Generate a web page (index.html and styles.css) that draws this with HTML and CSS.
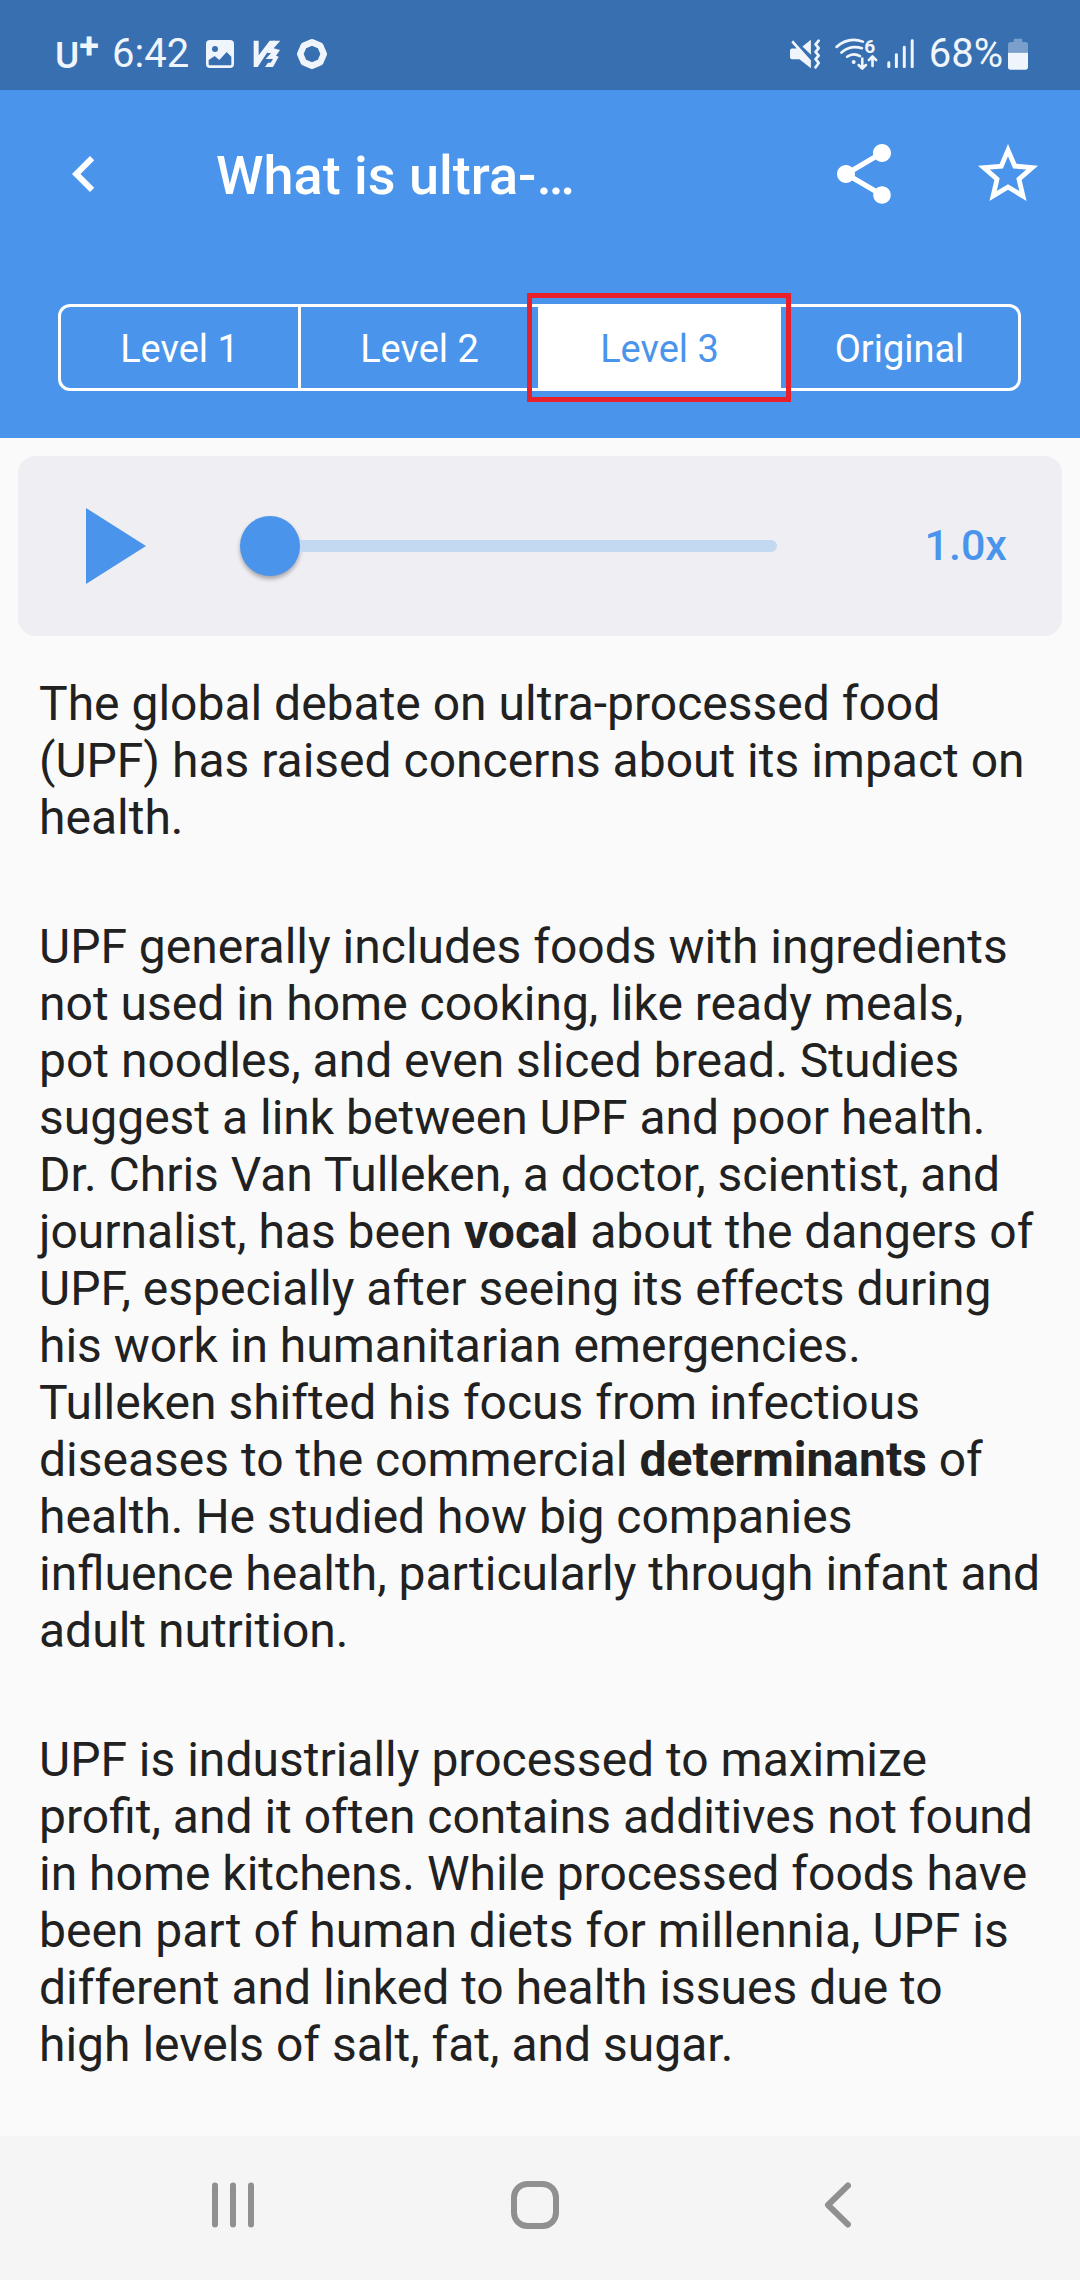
FILE: index.html
```html
<!DOCTYPE html>
<html lang="en">
<head>
  <meta charset="UTF-8" />
  <meta name="viewport" content="width=device-width, initial-scale=1.0"/>
  <title>What is ultra-processed food?</title>
  <link rel="stylesheet" href="styles.css">
</head>
<body>

  <div class="status-bar">
    <div class="status-left">
      <span class="carrier">U<span class="carrier-plus">+</span></span>
      <span class="clock">6:42</span>
      <svg class="icon-photo" viewBox="0 0 84 84">
        <path fill-rule="evenodd" d="M12 0H72Q84 0 84 12V72Q84 84 72 84H12Q0 84 0 72V12Q0 0 12 0ZM8 60V73Q8 76 11 76H73Q76 76 76 73V50L62 36L40 60L26 48ZM27 18A9 9 0 1 0 27 36A9 9 0 1 0 27 18Z"/>
      </svg>
      <svg class="icon-v3" viewBox="0 0 84 84">
        <path d="M2 2H17V46L50 2H66L14 81H2Z"/>
        <path d="M60 2H82L62 25L81 30L69 47L77 50L60 81H36L45 68H53L60 57H38L54 39H42Z"/>
      </svg>
      <svg class="icon-ring" viewBox="0 0 30 30">
        <polygon points="15,3.2 23.3,6.7 26.8,15 23.3,23.3 15,26.8 6.7,23.3 3.2,15 6.7,6.7"/>
      </svg>
    </div>
    <div class="status-right">
      <svg class="icon-mute" viewBox="60 54 92 92">
        <path d="M60 91Q60 85 66 85H80L64 67L69 61L122 120V144L88 117H66Q60 117 60 111ZM122 59V104L97 79Z"/>
        <path class="wave" d="M145 62L136 73L145 84L136 95L145 106L136 117L145 128L136 141"/>
      </svg>
      <svg class="icon-wifi" viewBox="192 50 132 100">
        <path class="line" d="M199 80Q235 48 279 64M214 97Q241 73 276 84M231 110Q250 96 270 108"/>
        <circle cx="251" cy="126" r="6"/>
        <path class="arrow" d="M277 115V145M266 135L277 146L288 135M308 138V109M297 120L308 109L319 120"/>
        <text x="283" y="97">6</text>
      </svg>
      <svg class="icon-signal" viewBox="351 56 81 88">
        <path d="M356 128V140M379 104V140M403 81V140M427 61V140"/>
      </svg>
      <span class="battery-level">68%</span>
      <svg class="icon-battery" viewBox="0 0 60 96">
        <path class="dim" d="M0 44V20Q0 12 8 12H17V6Q17 2 21 2H39Q43 2 43 6V12H52Q60 12 60 20V44Z"/>
        <path d="M0 44H60V87Q60 95 52 95H8Q0 95 0 87Z"/>
      </svg>
    </div>
  </div>

  <div class="header">
    <div class="top-bar">
      <svg class="icon back-icon" viewBox="0 0 24 24"><path d="M15.41 7.41L14 6l-6 6 6 6 1.41-1.41L10.83 12z"/></svg>
      <h2 class="page-title">What is ultra-…</h2>
      <svg class="icon" viewBox="0 0 24 24"><path d="M18 16.08c-.76 0-1.44.3-1.96.77L8.91 12.7c.05-.23.09-.46.09-.7s-.04-.47-.09-.7l7.05-4.11c.54.5 1.25.81 2.04.81 1.66 0 3-1.34 3-3s-1.34-3-3-3-3 1.34-3 3c0 .24.04.47.09.7L8.04 9.81C7.5 9.31 6.79 9 6 9c-1.66 0-3 1.34-3 3s1.34 3 3 3c.79 0 1.5-.31 2.04-.81l7.12 4.16c-.05.21-.08.43-.08.65 0 1.61 1.31 2.92 2.92 2.92 1.61 0 2.92-1.31 2.92-2.92s-1.31-2.92-2.92-2.92z"/></svg>
      <svg class="icon star-icon" viewBox="0 0 24 24"><path d="M22 9.24l-7.19-.62L12 2 9.19 8.63 2 9.24l5.46 4.73L5.82 21 12 17.27 18.18 21l-1.63-7.03L22 9.24zM12 15.4l-3.76 2.27 1-4.28-3.32-2.88 4.38-.38L12 6.1l1.71 4.04 4.38.38-3.32 2.88 1 4.28L12 15.4z"/></svg>
    </div>
    <div class="levels">
      <div class="level">Level 1</div>
      <div class="level">Level 2</div>
      <div class="level active">Level 3</div>
      <div class="level">Original</div>
    </div>
  </div>

  <div class="player">
    <svg class="play-icon" viewBox="0 0 60 76"><path d="M0 0L60 38L0 76Z"/></svg>
    <div class="slider">
      <div class="thumb"></div>
      <div class="track"></div>
    </div>
    <span class="speed">1.0x</span>
  </div>

  <div class="article">
    <p>The global debate on ultra-processed food (UPF) has raised concerns about its impact on health.</p>
    <p>UPF generally includes foods with ingredients not used in home cooking, like ready meals, pot noodles, and even sliced bread. Studies suggest a link between UPF and poor health. Dr. Chris Van Tulleken, a doctor, scientist, and journalist, has been <b>vocal</b> about the dangers of UPF, especially after seeing its effects during his work in humanitarian emergencies. Tulleken shifted his focus from infectious diseases to the commercial <b>determinants</b> of health. He studied how big companies influence health, particularly through infant and adult nutrition.</p>
    <p>UPF is industrially processed to maximize profit, and it often contains additives not found in home kitchens. While processed foods have been part of human diets for millennia, UPF is different and linked to health issues due to high levels of salt, fat, and sugar.</p>
  </div>

  <div class="nav-bar">
    <svg class="nav-recents" viewBox="0 0 42 48"><path d="M3 4.5V43.5M21 4.5V43.5M39 4.5V43.5"/></svg>
    <svg class="nav-home" viewBox="0 0 48 48"><rect x="3" y="3" width="42" height="42" rx="13.5"/></svg>
    <svg class="nav-back" viewBox="0 0 27 48"><path d="M24 4.5L4 24L24 43.5"/></svg>
  </div>

</body>
</html>
```
FILE: styles.css
```css
* {
  box-sizing: border-box;
}
body {
  margin: 0;
  width: 1080px;
  height: 2280px;
  font-family: Roboto, sans-serif;
  background-color: #fafafa;
  color: #212121;
  display: flex;
  flex-direction: column;
}
svg {
  display: block;
  flex: none;
}

/* status bar */
.status-bar {
  flex: none;
  height: 90px;
  padding: 17px 52px 0 55px;
  background-color: #386fb1;
  color: #f0f5fc;
  fill: #f0f5fc;
  display: flex;
  justify-content: space-between;
  align-items: center;
  font-size: 40px;
  line-height: 47px;
}
.status-left, .status-right {
  display: flex;
  align-items: center;
}
.carrier {
  display: flex;
  align-items: flex-start;
  width: 57px;
  font-size: 37px;
  font-weight: 500;
  line-height: 42px;
  padding-top: 4px;
}
.carrier-plus {
  font-size: 36px;
  font-weight: 700;
  line-height: 22px;
}
.clock {
  width: 94px;
}
.icon-photo {
  width: 28px;
  height: 28px;
}
.icon-v3 {
  width: 28px;
  height: 28px;
  margin-left: 19px;
}
.icon-ring {
  width: 30px;
  height: 30px;
  margin-left: 16px;
  fill: none;
  stroke: #f0f5fc;
  stroke-width: 6.4;
  stroke-linejoin: round;
}
.icon-mute {
  width: 31px;
  height: 31px;
}
.wave, .line, .arrow {
  fill: none;
  stroke: #f0f5fc;
  stroke-width: 8;
  stroke-linecap: round;
  stroke-linejoin: round;
}
.icon-wifi {
  width: 44px;
  height: 33px;
  margin-left: 13px;
  overflow: visible;
}
.icon-wifi text {
  font-size: 58px;
  font-weight: 700;
}
.icon-signal {
  width: 27px;
  height: 29px;
  margin-left: 9px;
  fill: none;
  stroke: #f0f5fc;
  stroke-width: 9;
  stroke-linecap: round;
}
.battery-level {
  margin-left: 15px;
}
.icon-battery {
  width: 20px;
  height: 32px;
  margin-left: 5px;
}
.dim {
  opacity: 0.36;
}

/* header */
.header {
  flex: none;
  height: 348px;
  background-color: #4a94ec;
  color: #fff;
}
.top-bar {
  display: flex;
  align-items: center;
  height: 168px;
  padding: 0 36px 0 48px;
}
.icon {
  width: 72px;
  height: 72px;
  fill: #fff;
}
.page-title {
  width: 708px;
  margin: 0;
  padding-left: 96px;
  padding-top: 2px;
  font-size: 54px;
  font-weight: 500;
}
.star-icon {
  margin-left: 72px;
}
.levels {
  display: flex;
  width: 963px;
  height: 87px;
  margin: 46px 0 0 58px;
  border: 3px solid #fff;
  border-radius: 12px;
}
.level {
  position: relative;
  flex: 1;
  display: flex;
  align-items: center;
  justify-content: center;
  padding-top: 3px;
  font-size: 38px;
  border-right: 3px solid #fff;
}
.level:last-child {
  border-right: none;
}
.level.active {
  background-color: #fff;
  color: #4a94ec;
  box-shadow: -3px 0 #fff;
}
.active::after {
  content: "";
  position: absolute;
  left: -14px;
  top: -14px;
  width: 254px;
  height: 99px;
  border: 5px solid #e8202a;
}

/* audio player */
.player {
  flex: none;
  display: flex;
  align-items: center;
  height: 180px;
  margin: 18px 18px 0;
  padding: 0 55px 0 68px;
  background-color: #eeeef3;
  border-radius: 18px;
}
.play-icon {
  width: 60px;
  height: 76px;
  fill: #4a94ec;
}
.slider {
  display: flex;
  align-items: center;
  width: 537px;
  margin-left: 94px;
}
.thumb {
  width: 60px;
  height: 60px;
  border-radius: 50%;
  background-color: #4a94ec;
  box-shadow: 0 3px 4px rgba(0, 0, 0, 0.3);
}
.track {
  flex: 1;
  height: 12px;
  border-radius: 0 6px 6px 0;
  background-color: #c3d8f1;
}
.speed {
  margin-left: auto;
  padding-bottom: 2px;
  font-size: 43px;
  font-weight: 500;
  color: #4a94ec;
}

/* text */
.article {
  flex: 1;
  padding: 39px 37px 0 39px;
  font-size: 48px;
  line-height: 57px;
}
.article p {
  margin: 0 0 72px;
}
.article p:last-child {
  margin-bottom: 0;
}

/* system navigation */
.nav-bar {
  flex: none;
  display: flex;
  align-items: center;
  height: 144px;
  padding: 0 229px 6px 212px;
  justify-content: space-between;
  background-color: #f5f5f5;
  fill: none;
  stroke: #909090;
  stroke-width: 6;
  stroke-linecap: round;
  stroke-linejoin: round;
}
.nav-recents {
  width: 42px;
  height: 48px;
}
.nav-home {
  width: 48px;
  height: 48px;
  margin-left: -8px;
}
.nav-back {
  width: 27px;
  height: 48px;
}
```
